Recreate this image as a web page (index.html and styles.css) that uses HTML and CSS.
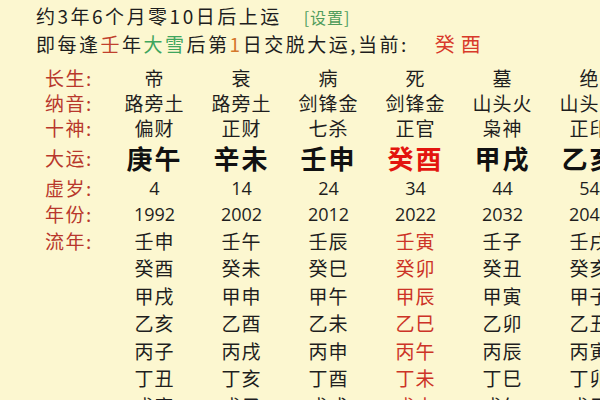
FILE: index.html
```html
<!DOCTYPE html>
<html lang="zh">
<head>
<meta charset="utf-8">
<link rel="stylesheet" href="styles.css">
</head>
<body>
<div class="page">
  <div class="intro">
    <div class="line">约3年6个月零10日后上运<span class="set">[设置]</span></div>
    <div class="line">即每逢<span class="rd">壬</span>年<span class="gr">大雪</span>后第<span class="or">1</span>日交脱大运,当前:<span class="cur">癸酉</span></div>
  </div>
  <div class="table">
    <div class="row r25"><div class="lab">长生:</div><div class="c">帝</div><div class="c">衰</div><div class="c">病</div><div class="c">死</div><div class="c">墓</div><div class="c">绝</div></div>
    <div class="row r25"><div class="lab">纳音:</div><div class="c">路旁土</div><div class="c">路旁土</div><div class="c">剑锋金</div><div class="c">剑锋金</div><div class="c">山头火</div><div class="c">山头火</div></div>
    <div class="row r25"><div class="lab">十神:</div><div class="c">偏财</div><div class="c">正财</div><div class="c">七杀</div><div class="c">正官</div><div class="c">枭神</div><div class="c">正印</div></div>
    <div class="row r34 big"><div class="lab">大运:</div><div class="c">庚午</div><div class="c">辛未</div><div class="c">壬申</div><div class="c now">癸酉</div><div class="c">甲戌</div><div class="c">乙亥</div></div>
    <div class="row r26 num"><div class="lab">虚岁:</div><div class="c">4</div><div class="c">14</div><div class="c">24</div><div class="c">34</div><div class="c">44</div><div class="c">54</div></div>
    <div class="row r26 num"><div class="lab">年份:</div><div class="c">1992</div><div class="c">2002</div><div class="c">2012</div><div class="c">2022</div><div class="c">2032</div><div class="c">2042</div></div>
    <div class="row r27"><div class="lab">流年:</div><div class="c">壬申</div><div class="c">壬午</div><div class="c">壬辰</div><div class="c hl">壬寅</div><div class="c">壬子</div><div class="c">壬戌</div></div>
    <div class="row r27"><div class="lab"></div><div class="c">癸酉</div><div class="c">癸未</div><div class="c">癸巳</div><div class="c hl">癸卯</div><div class="c">癸丑</div><div class="c">癸亥</div></div>
    <div class="row r27"><div class="lab"></div><div class="c">甲戌</div><div class="c">甲申</div><div class="c">甲午</div><div class="c hl">甲辰</div><div class="c">甲寅</div><div class="c">甲子</div></div>
    <div class="row r27"><div class="lab"></div><div class="c">乙亥</div><div class="c">乙酉</div><div class="c">乙未</div><div class="c hl">乙巳</div><div class="c">乙卯</div><div class="c">乙丑</div></div>
    <div class="row r27"><div class="lab"></div><div class="c">丙子</div><div class="c">丙戌</div><div class="c">丙申</div><div class="c hl">丙午</div><div class="c">丙辰</div><div class="c">丙寅</div></div>
    <div class="row r27"><div class="lab"></div><div class="c">丁丑</div><div class="c">丁亥</div><div class="c">丁酉</div><div class="c hl">丁未</div><div class="c">丁巳</div><div class="c">丁卯</div></div>
    <div class="row r27"><div class="lab"></div><div class="c">戊寅</div><div class="c">戊子</div><div class="c">戊戌</div><div class="c hl">戊申</div><div class="c">戊午</div><div class="c">戊辰</div></div>
  </div>
</div>
</body>
</html>
```
FILE: styles.css
```css
html, body {
  margin: 0;
  padding: 0;
  background: #fcf7d0;
  overflow: hidden;
}
.page {
  width: 600px;
  height: 400px;
  overflow: hidden;
  font-family: "Noto Sans CJK SC", "Noto Sans", sans-serif;
  color: #1e1e1e;
}
.intro {
  padding: 2px 0 0 36px;
}
.line {
  height: 28px;
  line-height: 28px;
  font-size: 19px;
  letter-spacing: 2.5px;
  white-space: nowrap;
}
.set {
  margin-left: 22px;
  font-size: 16px;
  letter-spacing: 1px;
  color: #4f9c5c;
}
.rd { color: #c0402c; }
.gr { color: #3fa55e; }
.or { color: #d4782c; }
.cur {
  color: #d8392a;
  margin-left: 26px;
  font-size: 20px;
  letter-spacing: 6px;
}
.table {
  margin-top: 7px;
  padding-left: 45px;
}
.row {
  display: grid;
  grid-template-columns: 66px repeat(6, 87px);
  align-items: center;
  white-space: nowrap;
}
.r25 { height: 25px; }
.r34 { height: 35px; }
.r26 { height: 26px; }
.r27 { height: 27.5px; }
.lab {
  color: #b8372c;
  font-size: 19px;
  line-height: 22px;
  letter-spacing: 1.5px;
}
.c {
  text-align: center;
  font-size: 19px;
  line-height: 22px;
  letter-spacing: 1px;
}
.big .c {
  font-size: 26px;
  line-height: 30px;
  font-weight: bold;
  letter-spacing: 2px;
  color: #111;
}
.big .c.now { color: #e3150e; }
.num .c {
  font-family: "Open Sans", "Liberation Sans", sans-serif;
  font-size: 18px;
  letter-spacing: 0;
}
.hl { color: #cc3327; }
```
